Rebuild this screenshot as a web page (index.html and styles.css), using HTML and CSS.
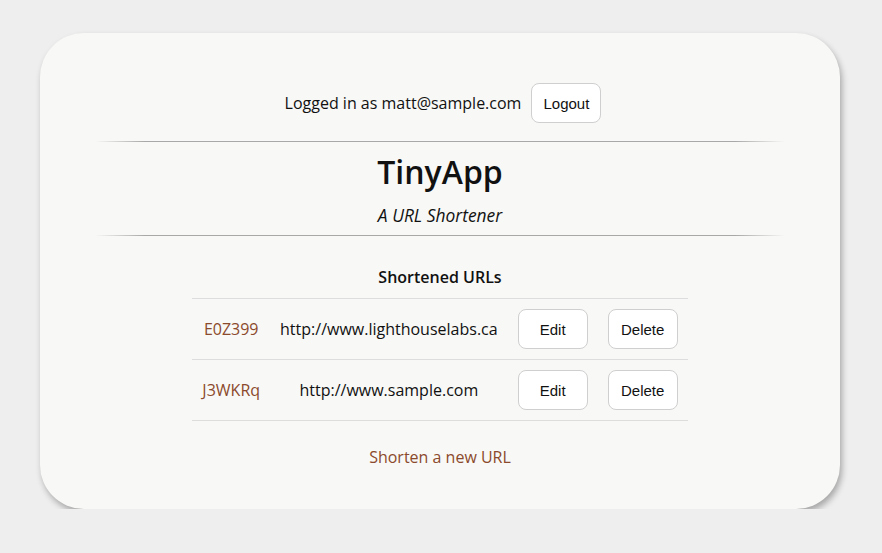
FILE: index.html
```html
<!DOCTYPE html>
<html lang="en">
<head>
<meta charset="utf-8">
<title>TinyApp</title>
<link rel="stylesheet" href="styles.css">
</head>
<body>
<main class="card">
  <div class="login-row">
    <span class="login-text">Logged in as matt@sample.com</span>
    <button class="btn">Logout</button>
  </div>
  <hr class="fade-rule">
  <header class="masthead">
    <h1 class="title">TinyApp</h1>
    <p class="subtitle">A URL Shortener</p>
  </header>
  <hr class="fade-rule">
  <table class="url-table">
    <thead>
      <tr><th colspan="4" class="table-head">Shortened URLs</th></tr>
    </thead>
    <tbody>
      <tr>
        <td><a class="link" href="#">E0Z399</a></td>
        <td>http://www.lighthouselabs.ca</td>
        <td><button class="btn">Edit</button></td>
        <td><button class="btn">Delete</button></td>
      </tr>
      <tr>
        <td><a class="link" href="#">J3WKRq</a></td>
        <td>http://www.sample.com</td>
        <td><button class="btn">Edit</button></td>
        <td><button class="btn">Delete</button></td>
      </tr>
    </tbody>
  </table>
  <a class="link new-link" href="#">Shorten a new URL</a>
</main>
</body>
</html>
```

FILE: styles.css
```css
html, body {
  margin: 0;
  padding: 0;
}
body {
  background: #eeeeee;
  font-family: "Open Sans", "Liberation Sans", sans-serif;
  font-size: 16px;
  color: #111;
  padding-top: 33px;
  padding-right: 2px;
}
.card {
  width: 800px;
  margin: 0 auto;
  box-sizing: border-box;
  background: #f8f8f6;
  border-radius: 44px;
  box-shadow: 2px 4px 6px rgba(0,0,0,0.3);
  padding: 50px 0 41px;
  display: flex;
  flex-direction: column;
  align-items: center;
}
.login-row {
  display: flex;
  align-items: center;
  gap: 10px;
  padding-left: 6px;
}
.login-text {
  line-height: 22px;
}
.btn {
  font-family: "Liberation Sans", Arial, sans-serif;
  font-size: 15px;
  color: #111;
  background: #ffffff;
  border: 1px solid #cfcfcf;
  border-radius: 8px;
  width: 70px;
  height: 40px;
  padding: 0;
}
.fade-rule {
  align-self: stretch;
  margin: 18px 55px 0;
  height: 1px;
  border: 0;
  background: linear-gradient(to right, rgba(170,170,170,0) 0, #a8a8a8 50px, #a8a8a8 calc(100% - 50px), rgba(170,170,170,0) 100%);
}
.masthead {
  display: flex;
  flex-direction: column;
  align-items: center;
  padding-top: 8px;
  padding-bottom: 8px;
}
.title {
  margin: 0;
  font-size: 32px;
  font-weight: 600;
  line-height: 44px;
}
.subtitle {
  margin: 9px 0 0;
  font-size: 17.4px;
  font-style: italic;
  line-height: 24px;
}
.fade-rule + .masthead + .fade-rule {
  margin-top: 0;
}
.url-table {
  margin-top: 20px;
  border-collapse: collapse;
}
.table-head {
  font-weight: 600;
  padding: 10px;
  line-height: 22px;
}
.url-table td {
  padding: 10px;
  text-align: center;
  border-top: 1px solid #dddddd;
  border-bottom: 1px solid #dddddd;
  line-height: 22px;
  vertical-align: middle;
}
.url-table td .btn {
  display: block;
}
.link {
  color: #8b4a2c;
  text-decoration: none;
}
.new-link {
  margin-top: 25px;
  line-height: 22px;
}
```
